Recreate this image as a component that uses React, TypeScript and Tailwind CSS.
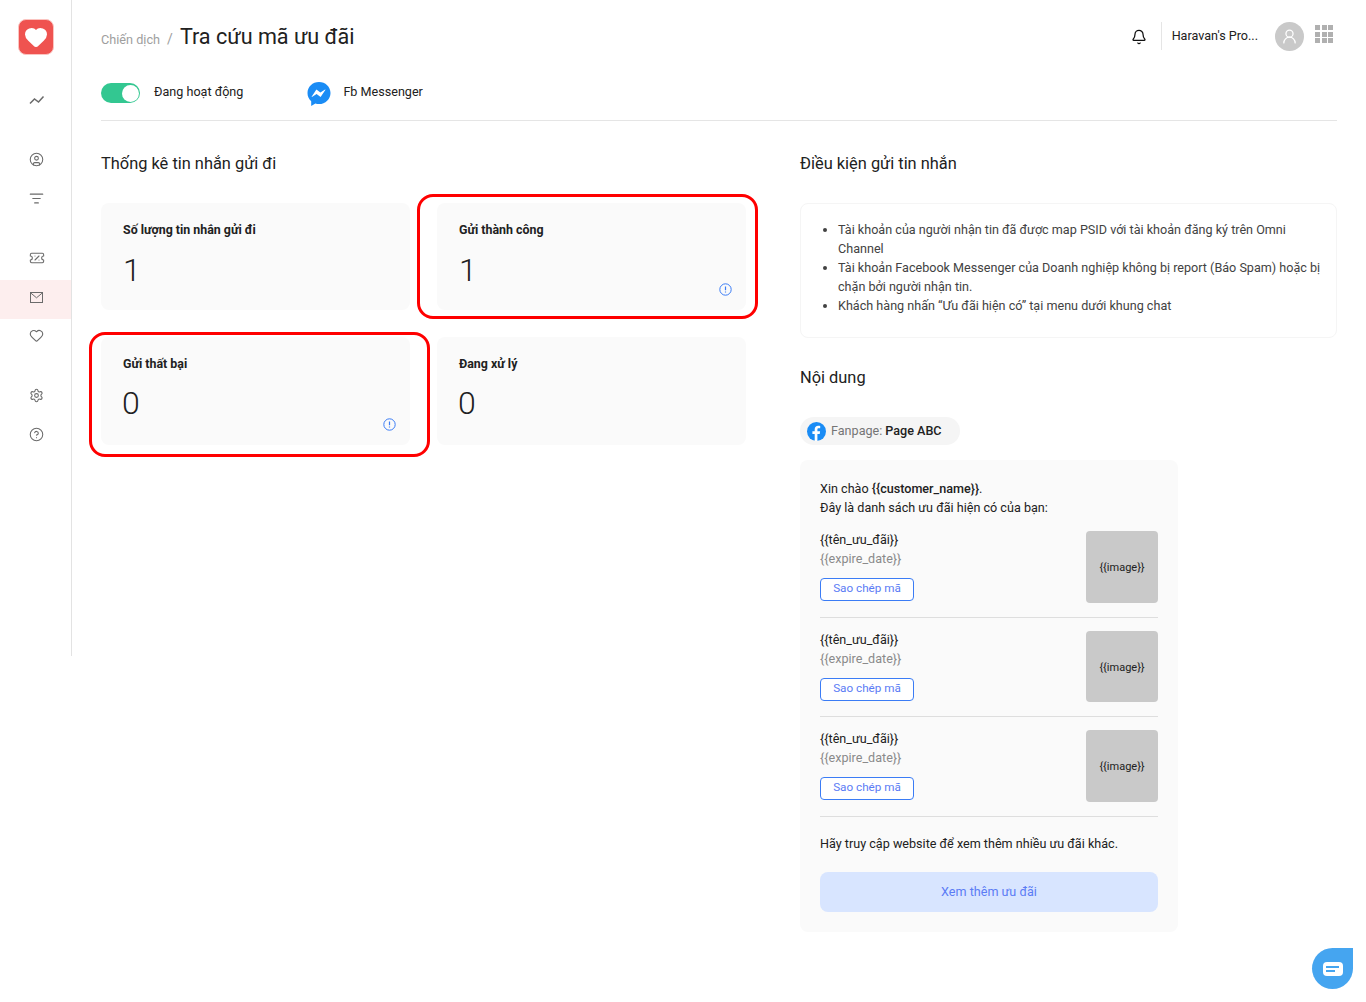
import { Bell, CircleHelp, CircleUser, Heart, ListFilter, Settings, TicketPercent, UserRound } from 'lucide-react';
import type { ReactNode } from 'react';

function NavIcon({ children, active }: { children: ReactNode; active?: boolean }) {
  return (
    <div className={`h-[39px] w-full flex items-center justify-center pl-[2px] text-[#6b6b6b] ${active ? 'bg-[#fdeeee] pb-[5px]' : 'pb-[6px]'}`}>
      {children}
    </div>
  );
}

function StatCard({ label, value, info, frame, lower }: { label: string; value: string; info?: boolean; frame?: string; lower?: boolean }) {
  return (
    <div className={`relative rounded-lg bg-[#fafafa] pl-[22px] pt-[19px] ${lower ? 'h-[108px]' : 'h-[107px]'}`}>
      {frame && <div className={`absolute rounded-[16px] border-[3px] border-[#ff0000] ${frame}`} />}
      <div className="text-[12.4px] leading-[16px] font-bold text-[#212121]">{label}</div>
      <div className={`text-[32px] leading-[38px] font-light text-[#212121] ${lower ? 'mt-[12px] -ml-px' : 'mt-[13px]'}`}>{value}</div>
      {info && (
        <svg className="absolute right-[14px] bottom-[14px]" width="13" height="13" viewBox="0 0 13 13" fill="none">
          <circle cx="6.5" cy="6.5" r="5.7" stroke="#3b7cf5" strokeWidth="1" />
          <path d="M6.5 3.4v3.9M6.5 8.6v1" stroke="#3b7cf5" strokeWidth="1.2" />
        </svg>
      )}
    </div>
  );
}

function Offer({ rowH, imgH }: { rowH?: string; imgH: string }) {
  return (
    <div className={`flex justify-between ${rowH ? `${rowH} border-b border-[#dedede]` : ''}`}>
      <div>
        <div className="text-[12.6px] leading-[19px] text-[#212121]">{'{{tên_ưu_đãi}}'}</div>
        <div className="text-[12.6px] leading-[19px] text-[#8a8a8a]">{'{{expire_date}}'}</div>
        <button className="mt-[10px] h-[23px] w-[94px] pb-[2px] rounded border border-[#3b7cf5] bg-white text-[11.7px] leading-[19px] text-[#5b7cf5]">
          Sao chép mã
        </button>
      </div>
      <div className={`${imgH} mt-px pt-[3px] w-[72px] rounded-sm bg-[#c9c9c9] flex items-center justify-center text-[11px] text-[#212121]`}>
        {'{{image}}'}
      </div>
    </div>
  );
}

export default function App() {
  return (
    <div className="relative flex min-h-[1002px] bg-white font-['Roboto',sans-serif] text-[#212121]">
      {/* Sidebar */}
      <aside className="w-[72px] h-[656px] shrink-0 border-r border-[#e3e3e3] flex flex-col items-center">
        <div className="mt-[19px] w-[36px] h-[36px] rounded-[8px] bg-[#ef5350] border border-[#fbc4c0] flex items-center justify-center">
          <Heart size={24} fill="#fff" stroke="#fff" />
        </div>
        <div className="mt-[28px] w-full">
          <NavIcon>
            <svg width="16" height="10" viewBox="0 0 16 10" fill="none" stroke="currentColor" strokeWidth="1.5">
              <path d="M1 8.500l4.500-4.500 4 3 5-5.500" />
            </svg>
          </NavIcon>
        </div>
        <div className="mt-[21px] w-full">
          <NavIcon><CircleUser size={15} strokeWidth={1.7} /></NavIcon>
          <NavIcon><ListFilter size={15} strokeWidth={1.7} /></NavIcon>
        </div>
        <div className="mt-[20px] w-full">
          <NavIcon><TicketPercent size={16} strokeWidth={1.6} /></NavIcon>
          <NavIcon active>
            <svg width="13" height="11" viewBox="0 0 13 11" fill="none" stroke="currentColor" strokeWidth="1">
              <rect x="0.500" y="0.500" width="12" height="10" />
              <path d="M.5.8l6 5 6-5" />
            </svg>
          </NavIcon>
          <NavIcon><Heart size={15} strokeWidth={1.8} /></NavIcon>
        </div>
        <div className="mt-[21px] w-full">
          <NavIcon><Settings size={15} strokeWidth={1.7} /></NavIcon>
          <NavIcon><CircleHelp size={15} strokeWidth={1.7} /></NavIcon>
        </div>
      </aside>

      <main className="w-[1236px] ml-[29px]">
        {/* Header */}
        <header className="h-[72px] flex items-center justify-between pt-[2px]">
          <div className="flex items-baseline">
            <span className="text-[12.7px] text-[#9e9e9e]">Chiến dịch</span>
            <span className="mx-[7px] text-sm text-[#9e9e9e]">/</span>
            <span className="text-[21.6px] leading-[28px] font-normal text-[#212121]">Tra cứu mã ưu đãi</span>
          </div>
          <div className="flex items-center -mt-[2px] mr-[4px]">
            <Bell size={16} strokeWidth={1.9} className="mt-px text-[#111111] mr-[14px]" />
            <div className="h-[28px] border-l border-[#e5e5e5] pl-[10px] text-[12.6px] leading-[28px] text-[#212121]">Haravan's Pro...</div>
            <div className="ml-[17px] w-[29px] h-[29px] rounded-full bg-[#c9c9c9] flex items-center justify-center">
              <UserRound size={17} strokeWidth={1.8} className="text-white" />
            </div>
            <div className="ml-[11px] mb-[4px] grid grid-cols-3 gap-[1.5px]">
              {[0, 1, 2, 3, 4, 5, 6, 7, 8].map((i) => (
                <div key={i} className="w-[5px] h-[5px] bg-[#b0b0b0]" />
              ))}
            </div>
          </div>
        </header>

        {/* Status row */}
        <div className="h-[49px] border-b border-[#e5e5e5] flex items-start pt-[11px]">
          <div className="w-[39px] h-[20px] rounded-full bg-[#33c791] flex items-center justify-end pr-[1px]">
            <div className="w-[17px] h-[17px] rounded-full bg-white" />
          </div>
          <span className="ml-[14px] text-[12.6px] leading-[18px] text-[#212121]">Đang hoạt động</span>
          <svg className="ml-[64px] -mt-[2px]" width="24" height="26" viewBox="0 0 24 26">
            <path d="M12 1C5.600 1 .500 5.800.500 12c0 3.300 1.300 6.200 3.700 8.200v4.800l4.200-2.500c1.100.4 2.300.6 3.600.6 6.400 0 11.500-4.900 11.500-11.100S18.400 1 12 1z" fill="#1a8cf5" />
            <path d="M4.600 15.800l4.800-7.300 4 3 4.700-3 .4.300-4.900 7.200-4-3-4.700 3z" fill="#fff" />
          </svg>
          <span className="ml-[12px] text-[12.6px] leading-[18px] text-[#212121]">Fb Messenger</span>
        </div>

        <div className="flex">
          {/* Left column */}
          <section className="w-[645px]">
            <h2 className="mt-[33px] text-[16.4px] leading-[20px] font-normal text-[#212121]">Thống kê tin nhắn gửi đi</h2>
            <div className="mt-[29px] grid grid-cols-2 gap-x-[27px] gap-y-[27px]">
              <StatCard label="Số lượng tin nhắn gửi đi" value="1" />
              <StatCard label="Gửi thành công" value="1" info frame="-left-[20px] -right-[12px] -top-[9px] -bottom-[9px]" />
              <StatCard label="Gửi thất bại" value="0" info lower frame="-left-[12px] -right-[20px] -top-[5px] -bottom-[12px]" />
              <StatCard label="Đang xử lý" value="0" lower />
            </div>
          </section>

          {/* Right column */}
          <section className="ml-[54px] w-[537px]">
            <h2 className="mt-[33px] text-[16.4px] leading-[20px] font-normal text-[#212121]">Điều kiện gửi tin nhắn</h2>
            <div className="mt-[29px] h-[135px] rounded-lg border border-[#f5f5f5] pl-[37px] pr-[12px] pt-[16px]">
              <ul className="list-disc pl-0 text-[12.6px] leading-[19px] text-[#424242]">
                <li>Tài khoản của người nhận tin đã được map PSID với tài khoản đăng ký trên Omni Channel</li>
                <li>Tài khoản Facebook Messenger của Doanh nghiệp không bị report (Báo Spam) hoặc bị chặn bởi người nhận tin.</li>
                <li>Khách hàng nhấn “Ưu đãi hiện có” tại menu dưới khung chat</li>
              </ul>
            </div>
            <h2 className="mt-[30px] text-[16.4px] leading-[20px] font-normal text-[#212121]">Nội dung</h2>

            <div className="mt-[29px] w-[160px] h-[28px] rounded-full bg-[#f5f5f5] flex items-center pl-[7px] text-[12.6px]">
              <svg width="19" height="19" viewBox="0 0 19 19">
                <circle cx="9.500" cy="9.500" r="9.500" fill="#1a8cf5" />
                <path d="M10.400 19v-7h2.300l.4-2.700h-2.700V7.600c0-.8.3-1.300 1.400-1.300h1.400V3.900c-.3 0-1.100-.1-2-.1-2.100 0-3.500 1.300-3.500 3.500v2H5.400V12h2.300v7z" fill="#fff" />
              </svg>
              <span className="ml-[5px] text-[#757575]">Fanpage:</span>
              <span className="ml-[3px] font-medium text-[#212121]">Page ABC</span>
            </div>

            <div className="mt-[15px] w-[378px] h-[472px] rounded-lg bg-[#fafafa] px-[20px] pt-[19px]">
              <div className="text-[12.6px] leading-[19px] text-[#212121]">
                Xin chào <span className="font-medium">{'{{customer_name}}'}</span>.
                <br />
                Đây là danh sách ưu đãi hiện có của bạn:
              </div>
              <div className="mt-[13px]">
                <Offer rowH="h-[88px]" imgH="h-[72px]" />
                <div className="mt-[12px]"><Offer rowH="h-[87px]" imgH="h-[71px]" /></div>
                <div className="mt-[12px]"><Offer rowH="h-[88px]" imgH="h-[72px]" /></div>
              </div>
              <div className="mt-[17px] text-[12.6px] leading-[19px] text-[#212121]">Hãy truy cập website để xem thêm nhiều ưu đãi khác.</div>
              <button className="mt-[19px] w-full h-[40px] rounded-lg bg-[#d8e5ff] text-[12.6px] text-[#5b7cf5]">Xem thêm ưu đãi</button>
            </div>
          </section>
        </div>
      </main>

      {/* Chat bubble */}
      <div className="absolute left-[1312px] top-[948px] w-[41px] h-[41px] rounded-full rounded-tr-[6px] bg-[#45a5f0] flex items-center justify-center">
        <div className="w-[20px] h-[14px] rounded-[4px] bg-white flex flex-col justify-center gap-[2px] pl-[3px]">
          <div className="h-[2px] w-[13px] bg-[#45a5f0]" />
          <div className="h-[2px] w-[9px] bg-[#45a5f0]" />
        </div>
      </div>
    </div>
  );
}
